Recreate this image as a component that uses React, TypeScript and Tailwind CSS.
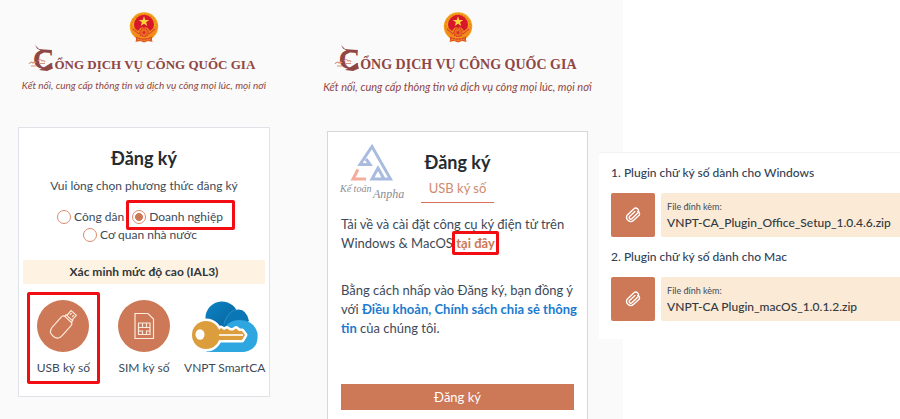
import { useState } from 'react';
import type { ReactNode } from 'react';

const METHODS = [
  { id: 'citizen', label: 'Công dân' },
  { id: 'business', label: 'Doanh nghiệp' },
  { id: 'agency', label: 'Cơ quan nhà nước' },
];

const PLUGINS = [
  { title: '1. Plugin chữ ký số dành cho Windows', file: 'VNPT-CA_Plugin_Office_Setup_1.0.4.6.zip' },
  { title: '2. Plugin chữ ký số dành cho Mac', file: 'VNPT-CA Plugin_macOS_1.0.1.2.zip' },
];

function Emblem() {
  return (
    <svg width="30" height="31" viewBox="0 0 30 31" aria-hidden="true">
      <path d="M8 23 L6.500 30 L11 29 L15 30.500 L19 29 L23.500 30 L22 23Z" fill="#e8651c" />
      <circle cx="15" cy="14.500" r="14.200" fill="#f5a21b" />
      <circle cx="15" cy="14.500" r="12.300" fill="none" stroke="#e98414" strokeWidth="1.500" strokeDasharray="2 1.200" />
      <circle cx="15" cy="12.800" r="10" fill="#d7182a" />
      <path d="M15 4.200 L16.300 7.900 L20.200 7.900 L17.100 10.200 L18.200 14 L15 11.700 L11.800 14 L12.900 10.200 L9.800 7.900 L13.700 7.900Z" fill="#fcd53a" />
      <path d="M1.500 13 Q6 16 9 19 Q12 13.500 15 16 Q18 13.500 21 19 Q24 16 28.500 13 Q28 22 22.500 25 L7.500 25 Q2 22 1.500 13Z" fill="#ef8a1b" />
      <path d="M4 17 L10 22 M26 17 L20 22" stroke="#d7302a" strokeWidth="1" />
      <circle cx="15" cy="20.500" r="4.300" fill="#e86a20" stroke="#d7302a" strokeWidth="1.200" strokeDasharray="1.400 1" />
      <circle cx="15" cy="20.500" r="1.500" fill="#d7302a" />
      <path d="M6.500 24.500 Q15 28.500 23.500 24.500 L22.500 28 Q15 30.500 7.500 28Z" fill="#dd4a24" />
      <path d="M8.500 27 Q15 29.500 21.500 27" stroke="#f9b233" strokeWidth="1" strokeDasharray="2 1" fill="none" />
    </svg>
  );
}

function Brand({ titleClass, taglineClass }: { titleClass: string; taglineClass: string }) {
  return (
    <header className="flex flex-col items-center pt-3 whitespace-nowrap text-[#8f4644]">
      <Emblem />
      <div className="flex h-8 items-baseline justify-center font-['Liberation_Serif',serif] font-bold">
        <span className="relative text-3xl leading-8">
          C
          {/* dragon head and clouds around the initial */}
          <svg className="absolute -left-1 top-0 overflow-visible" width="26" height="32" viewBox="0 0 26 32" aria-hidden="true">
            <path d="M6 2 L10 6 L15 6.500 L23 7 L22 10 L15 9.500 L10 12 L11.500 7.500 L8 5.500Z" fill="#8f4644" />
            <path d="M14 25 L22 20 L24 25.500 L18 28 L10 27Z" fill="#8f4644" />
            <path d="M0 21 q2 -3 4 -1 q2 -2 3 0 M2 23 h5 M9 18 q2 -3 4 0 q2 -1 3 1 M10 20.500 h6" stroke="#d99480" strokeWidth="1.200" fill="none" />
          </svg>
        </span>
        <h2 className={titleClass}>ỔNG DỊCH VỤ CÔNG QUỐC GIA</h2>
      </div>
      <p className={taglineClass}>Kết nối, cung cấp thông tin và dịch vụ công mọi lúc, mọi nơi</p>
    </header>
  );
}

// red frame that points at the option to choose
function Highlight({ className }: { className: string }) {
  return <span aria-hidden="true" className={`absolute border-3 border-[#f20d12] rounded-xs pointer-events-none ${className}`} />;
}

function UsbIcon() {
  return (
    <svg width="52" height="52" viewBox="0 0 52 52" aria-hidden="true">
      <circle cx="26" cy="26" r="26" fill="#cd7856" />
      <g transform="rotate(42 25 26)" fill="none" stroke="#fbe9dc" strokeWidth="1.200">
        <path d="M18.500 20 Q18.500 17 21 17 H29 Q31.500 17 31.500 20 V33 Q31.500 39.500 25 39.500 Q18.500 39.500 18.500 33Z" />
        <path d="M20.500 17 V15 H29.500 V17 M21.500 15 V8.500 H28.500 V15" />
        <path d="M23.500 10 V12.500 M26.500 10 V12.500" />
      </g>
    </svg>
  );
}

function SimIcon() {
  return (
    <svg width="52" height="52" viewBox="0 0 52 52" aria-hidden="true">
      <circle cx="26" cy="26" r="26" fill="#cd7856" />
      <g fill="none" stroke="#fbe9dc" strokeWidth="1.200">
        <path d="M17 13.500 H30 L35.500 19 V38.500 H17Z" />
        <path d="M20.500 23 H32 V34.500 H20.500Z M20.500 27.500 H32 M24.500 23 V27.500 M28.500 23 V27.500 M20.500 31 H24.500 V34.500 M28.500 34.500 V31 H32" />
      </g>
    </svg>
  );
}

function SmartCaIcon() {
  return (
    <svg width="66" height="52" viewBox="0 0 66 52" aria-hidden="true">
      <defs>
        <linearGradient id="cloudBack" x1="0" y1="0" x2="1" y2="1">
          <stop offset="0" stopColor="#0d84c6" />
          <stop offset="1" stopColor="#066299" />
        </linearGradient>
      </defs>
      <path d="M15 25 A15.500 15.500 0 1 1 45 11 L40 28 H16Z" fill="url(#cloudBack)" />
      <path d="M30 28 Q33 14 43 10 Q54 7 57 21 L45 30Z" fill="#0a76b4" />
      <path d="M32 24 Q35 12 44 9.500" stroke="#2a97d2" strokeWidth="0.800" fill="none" />
      <path d="M33 27 Q38 20 47 20 Q62 20 65.500 33 Q67 50 52 52 H14 L30 30Z" fill="#2ea6df" />
      <g stroke="#fff" strokeWidth="5" strokeLinejoin="round" fill="#fff">
        <circle cx="14" cy="35" r="14" />
        <path d="M22 30 H27 L29 28 L32 30 L35 28.500 L38 30.500 H41 L44 28.500 L47 31 H50 L53 35 L50 40 H26 L22 43Z" />
      </g>
      <circle cx="14" cy="35" r="14" fill="#dc9d3c" />
      <path d="M22 30 H27 L29 28 L32 30 L35 28.500 L38 30.500 H41 L44 28.500 L47 31 H50 L53 35 L50 40 H26 L22 43Z" fill="#dc9d3c" />
      <path d="M27 35 H51" stroke="#fff" strokeWidth="1.600" />
      <ellipse cx="8" cy="34.500" rx="4.500" ry="5.200" fill="#fff" />
    </svg>
  );
}

function AnphaLogo() {
  return (
    <svg width="64" height="58" viewBox="0 0 64 58" role="img" aria-label="Kế toán Anpha" className="overflow-visible">
      <g fill="none" strokeWidth="3">
        <path d="M25 15 L29 20.500 H19 L31 2.500 L49.500 35 H31 L37 24 L42.500 34" stroke="#a9bcdf" />
        <path d="M17 25.500 L12 35 H25" stroke="#f5ac9b" />
      </g>
      <g fill="#8a8d92" fontFamily="Liberation Serif, serif" fontStyle="italic">
        <text x="-1" y="48" fontSize="10">Kế toán</text>
        <text x="32" y="54" fontSize="12">Anpha</text>
      </g>
    </svg>
  );
}

function ClipIcon() {
  return (
    <svg width="16" height="16" viewBox="0 0 24 24" fill="none" stroke="currentColor" strokeWidth="2" strokeLinecap="round" strokeLinejoin="round" aria-hidden="true">
      <path d="m21.500 12-8.500 8a6.200 6.200 0 0 1-9-8.500l9-8.500a4.300 4.300 0 0 1 6.200 6l-9 8.500a2.300 2.300 0 0 1-3.300-3.200l8-7.500" />
      <path d="M19 6.500a4 4 0 0 1 2.500 5.500" />
    </svg>
  );
}

function Device({ icon, label, highlighted }: { icon: ReactNode; label: string; highlighted?: boolean }) {
  return (
    <button type="button" className="relative flex flex-col items-center gap-1 whitespace-nowrap">
      {icon}
      <span className="text-xs leading-6">{label}</span>
      {highlighted && <Highlight className="-inset-x-2.5 -top-2 -bottom-1" />}
    </button>
  );
}

export default function App() {
  const [method, setMethod] = useState('business');

  return (
    <main className="flex min-h-screen items-start bg-white font-['Lato','Noto_Sans',sans-serif] text-[#3d4a59]">
      <div className="w-9/13 shrink-0 min-h-screen grid grid-cols-[minmax(0,252fr)_minmax(0,261fr)] gap-[57px] pl-[18px] pr-[35px] bg-[#fafafa]">
        {/* Step 1: registration method */}
        <section>
          <Brand titleClass="text-[13px] leading-none" taglineClass="text-[10px] leading-5 italic" />
          <div className="mt-8 border border-[#dfe2e6] bg-white px-1 pt-4 pb-4 text-center">
            <h1 className="text-lg leading-7 font-bold text-[#262b30]">Đăng ký</h1>
            <p className="mt-1 text-xs leading-5">Vui lòng chọn phương thức đăng ký</p>
            <fieldset className="mt-3 flex flex-wrap justify-center gap-x-2 pl-5 pr-7">
              {METHODS.map((m) => (
                <label key={m.id} className="relative flex items-center gap-[3px] text-xs leading-[18px] whitespace-nowrap">
                  <input
                    type="radio"
                    name="method"
                    checked={method === m.id}
                    onChange={() => setMethod(m.id)}
                    className="appearance-none size-3.5 rounded-full border border-[#d98b6d] bg-white checked:bg-[radial-gradient(circle_closest-side,#cd7856_60%,transparent_70%)]"
                  />
                  {m.label}
                  {m.id === 'business' && <Highlight className="-left-1.5 -right-3 -top-2 -bottom-1" />}
                </label>
              ))}
            </fieldset>
            <h3 className="mt-4 bg-[#fef3e2] text-xs leading-6 font-bold text-[#30363c]">Xác minh mức độ cao (IAL3)</h3>
            <div className="mt-4 grid grid-cols-3 justify-items-center">
              <Device icon={<UsbIcon />} label="USB ký số" highlighted />
              <Device icon={<SimIcon />} label="SIM ký số" />
              <Device icon={<SmartCaIcon />} label="VNPT SmartCA" />
            </div>
          </div>
        </section>

        {/* Step 2: USB signing */}
        <section className="flex flex-col">
          <Brand titleClass="text-sm leading-none" taglineClass="text-[11px] leading-6 italic" />
          <div className="mt-8 flex-1 border border-b-0 border-[#d5d8db] bg-white px-[13px] pt-3">
            <div className="grid grid-cols-[1fr_auto_1fr]">
              <AnphaLogo />
              <div className="pt-1 text-center">
                <h1 className="text-lg leading-7 font-bold text-[#262b30]">Đăng ký</h1>
                <p className="px-2 pb-0.5 border-b border-[#d9705a] text-[13px] leading-6 text-[#d08a70]">USB ký số</p>
              </div>
            </div>
            <div className="-mr-2 text-[13px] leading-[19px]">
              <p className="mt-3">
                Tải về và cài đặt công cụ ký điện tử trên Windows &amp; MacOS{' '}
                <a href="#plugins" className="relative font-bold text-[#cd7856]">
                  tại đây
                  <Highlight className="-inset-1" />
                </a>
              </p>
              <p className="mt-7">
                Bằng cách nhấp vào Đăng ký, bạn đồng ý với{' '}
                <a href="#terms" className="font-bold text-[#1b7bd0]">Điều khoản, Chính sách chia sẻ thông tin</a> của chúng tôi.
              </p>
            </div>
            <button type="button" className="mt-11.5 w-full bg-[#cd7856] text-[13px] leading-[26px] text-white">Đăng ký</button>
          </div>
        </section>
      </div>

      {/* Plugin downloads */}
      <aside id="plugins" className="relative flex-1 min-w-0 -ml-6 mt-38 pl-3 pt-2 pb-2.5 bg-white border-t border-[#f2f2f2]">
        {PLUGINS.map((p) => (
          <div key={p.title} className="pb-2">
            <h3 className="text-xs leading-6 font-medium text-[#2f4156]">{p.title}</h3>
            <div className="mt-2 flex gap-1.5">
              <button type="button" aria-label="Tải tệp" className="size-11 shrink-0 flex items-center justify-center rounded-xs bg-[#cd7856] text-white">
                <ClipIcon />
              </button>
              <div className="flex-1 min-w-0 pl-1.5 pt-2 rounded-l-xs bg-[#faead6] whitespace-nowrap">
                <p className="text-[9px] leading-3">File đính kèm:</p>
                <a href="#download" className="block text-xs leading-5 font-medium text-[#33393f]">{p.file}</a>
              </div>
            </div>
          </div>
        ))}
      </aside>
    </main>
  );
}
